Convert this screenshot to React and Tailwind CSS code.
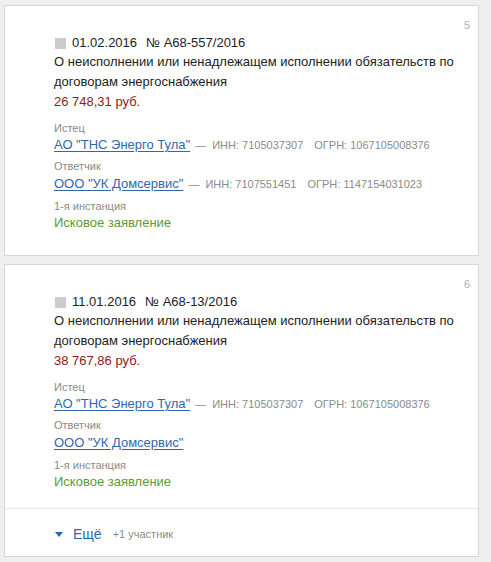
import React from "react";

const cases = [
  {
    n: 5,
    date: "01.02.2016",
    num: "№ А68-557/2016",
    amount: "26 748,31 руб.",
    plaintiff: { name: 'АО "ТНС Энерго Тула"', inn: "7105037307", ogrn: "1067105008376" },
    defendant: { name: 'ООО "УК Домсервис"', inn: "7107551451", ogrn: "1147154031023" },
    footer: false,
  },
  {
    n: 6,
    date: "11.01.2016",
    num: "№ А68-13/2016",
    amount: "38 767,86 руб.",
    plaintiff: { name: 'АО "ТНС Энерго Тула"', inn: "7105037307", ogrn: "1067105008376" },
    defendant: { name: 'ООО "УК Домсервис"' },
    footer: true,
  },
];

function Party({ p }) {
  return (
    <div className="flex items-baseline leading-[18px]">
      <a className="text-[13px] text-[#2f67ad] underline underline-offset-2 decoration-[#2f67ad]">{p.name}</a>
      {p.inn && (
        <span className="text-[11px] text-[#8a8a8a] flex items-baseline">
          <span className="ml-[5px]">—</span>
          <span className="ml-[6px]">ИНН: {p.inn}</span>
          <span className="ml-[11px]">ОГРН: {p.ogrn}</span>
        </span>
      )}
    </div>
  );
}

function Card({ c }) {
  return (
    <div className="bg-white border border-[#d6d6d6] mx-[4px]">
      <div className={`pt-[12px] pl-[49px] pr-[8px] ${c.footer ? "pb-[16px]" : "pb-[22px]"}`}>
        <div className="text-right text-[11px] leading-[14px] text-[#b0b0b0]">{c.n}</div>
        <div className="mt-[2px] flex items-center leading-[18px] text-[13px] text-[#222]">
          <span className="inline-block w-[11px] h-[11px] bg-[#cccccc] ml-[1px] mr-[6px]"></span>
          <span>{c.date}</span>
          <span className="ml-[9px]">{c.num}</span>
        </div>
        <div className="text-[13px] leading-[20px] text-[#222] pr-[4px]">
          О неисполнении или ненадлежащем исполнении обязательств по договорам энергоснабжения
        </div>
        <div className="text-[13px] leading-[20px] text-[#8e1a1a]">{c.amount}</div>
        <div className="mt-[9px] text-[11px] leading-[14px] text-[#8a8a8a]">Истец</div>
        <div className="mt-[1px]">
          <Party p={c.plaintiff} />
        </div>
        <div className="mt-[5px] text-[11px] leading-[14px] text-[#8a8a8a]">Ответчик</div>
        <div className="mt-[2px]">
          <Party p={c.defendant} />
        </div>
        <div className="mt-[6px] text-[11px] leading-[14px] text-[#8a8a8a]">1-я инстанция</div>
        <div className="text-[13px] leading-[20px] text-[#5c9a35]">Исковое заявление</div>
      </div>
      {c.footer && (
        <div className="border-t border-[#e6e6e6] pt-[15px] pb-[12px] pl-[50px] flex items-center leading-[20px]">
          <svg width="8" height="5" viewBox="0 0 8 5" className="mr-[10px] mt-[1px]">
            <path d="M0 0 L8 0 L4 5 Z" fill="#2f67ad" />
          </svg>
          <span className="text-[14px] text-[#2f67ad]">Ещё</span>
          <span className="ml-[11px] text-[11px] text-[#8a8a8a]">+1 участник</span>
        </div>
      )}
    </div>
  );
}

export default function App() {
  return (
    <div className="w-[491px] h-[562px] bg-[#efefef] pt-[5px] overflow-hidden" style={{ fontFamily: '"Liberation Sans", Arial, sans-serif' }}>
      <div className="flex flex-col gap-[8px] w-[483px]">
        {cases.map((c) => (
          <Card key={c.n} c={c} />
        ))}
      </div>
    </div>
  );
}
